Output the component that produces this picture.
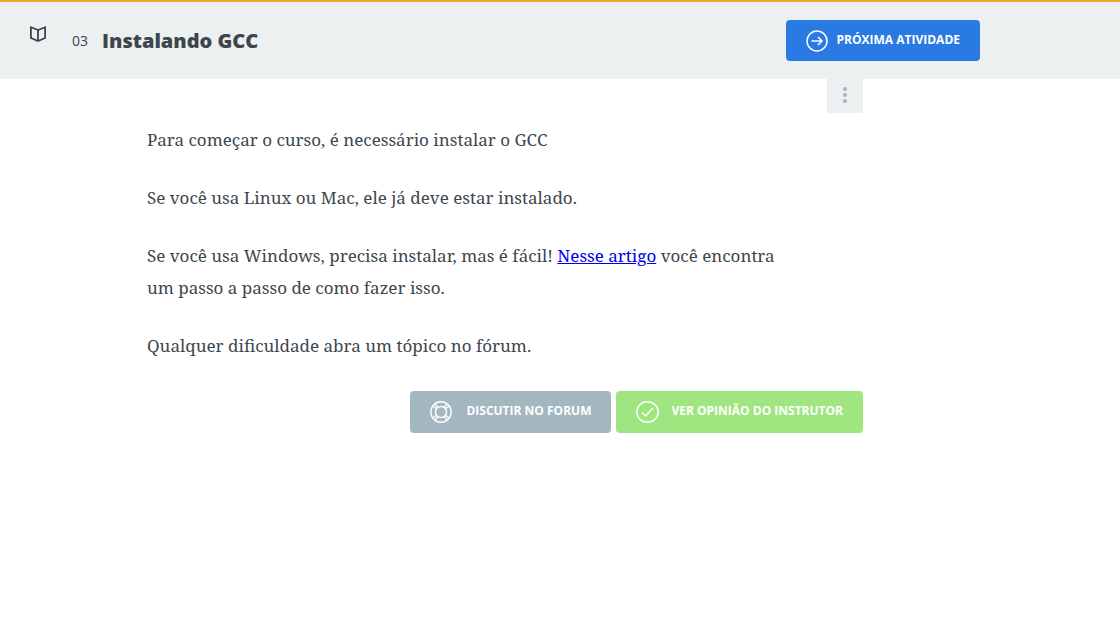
<svelte:head><title>Instalando GCC</title></svelte:head>

<header>
  <a class="book" href="#curso" aria-label="Curso">
    <svg width="20" height="20" viewBox="0 0 20 20" fill="none" stroke="#3d464d" stroke-width="1.800"><path d="M10 6 2.900 3.200V14L10 17l7.100-3V3.200ZM10 6V17" /></svg>
  </a>
  <h1><span>03</span>Instalando GCC</h1>
  <button class="btn next">
    <svg width="22" height="22" viewBox="0 0 22 22" fill="none" stroke="currentColor" stroke-width="1.500"><circle cx="11" cy="11" r="10" /><path d="M5.500 11h10.500M12 7l4 4-4 4" /></svg>
    <span>PRÓXIMA ATIVIDADE</span>
  </button>
</header>

<main>
  <button class="more" aria-label="Mais opções">
    <svg width="6" height="18" viewBox="0 0 6 18" fill="#a2b7c0"><circle cx="3" cy="3" r="2" /><circle cx="3" cy="9" r="2" /><circle cx="3" cy="15" r="2" /></svg>
  </button>
  <article>
    <p>Para começar o curso, é necessário instalar o GCC</p>
    <p>Se você usa Linux ou Mac, ele já deve estar instalado.</p>
    <p>Se você usa Windows, precisa instalar, mas é fácil! <a href="#artigo">Nesse artigo</a> você encontra um passo a passo de como fazer isso.</p>
    <p>Qualquer dificuldade abra um tópico no fórum.</p>
  </article>
  <div class="actions">
    <button class="btn forum">
      <svg width="22" height="22" viewBox="0 0 22 22" fill="none" stroke="currentColor" stroke-width="1.400"><circle cx="11" cy="11" r="10.200" /><circle cx="11" cy="11" r="5.500" /><path d="m3 5 4 3.200M5 3l3.200 4M19 5l-4 3.200M17 3l-3.200 4M3 17l4-3.200M5 19l3.200-4M19 17l-4-3.200M17 19l-3.200-4" /></svg>
      <span>DISCUTIR NO FORUM</span>
    </button>
    <button class="btn opinion">
      <svg width="23" height="22" viewBox="0 0 23 22" fill="none" stroke="currentColor" stroke-width="1.500"><ellipse cx="11.500" cy="11" rx="10.700" ry="10.200" /><path d="m6 11.500 3.500 3.500 7.500-8" /></svg>
      <span>VER OPINIÃO DO INSTRUTOR</span>
    </button>
  </div>
</main>

<style>
  :global(body) { background: #fff; color: #3d464d; font-family: "Open Sans", sans-serif; }
  :global(*) { box-sizing: border-box; }
  header { display: flex; align-items: center; border-top: 2px solid #f0a830; background: #ecf0f1; min-height: 79px; padding: 0 140px 0 28px; }
  .book { display: flex; margin: 0 24px 14px 0; }
  h1 { flex: 1; display: flex; align-items: center; gap: 14px; margin: 0; font-size: 20px; line-height: 32px; font-weight: 800; }
  h1 span { font-size: 14px; font-weight: 400; }
  .btn { display: flex; align-items: center; gap: 9px; min-height: 42px; padding: 0 20px; border: 0; border-radius: 4px; color: #fff; font: 700 12px/18px "Open Sans", sans-serif; white-space: nowrap; cursor: pointer; }
  .btn span { padding-bottom: 2px; }
  .next { min-height: 41px; background: #2a7ae4; }
  main { max-width: 863px; padding-left: 147px; display: flex; flex-direction: column; }
  .more { display: flex; align-items: center; justify-content: center; align-self: flex-end; width: 36px; height: 34px; padding: 0 0 2px; border: 0; border-radius: 0 0 2px 2px; background: #ecf0f1; }
  article { max-width: 640px; margin-top: 11px; font: 17px/32px "Noto Serif", "Liberation Serif", serif; }
  p { margin: 0 0 26px; }
  a { color: #00e; }
  .actions { display: flex; justify-content: flex-end; gap: 5px; margin-top: 3px; }
  .forum { gap: 14px; background: #a2b7c0; }
  .opinion { gap: 12px; background: #9fe681; }
</style>
